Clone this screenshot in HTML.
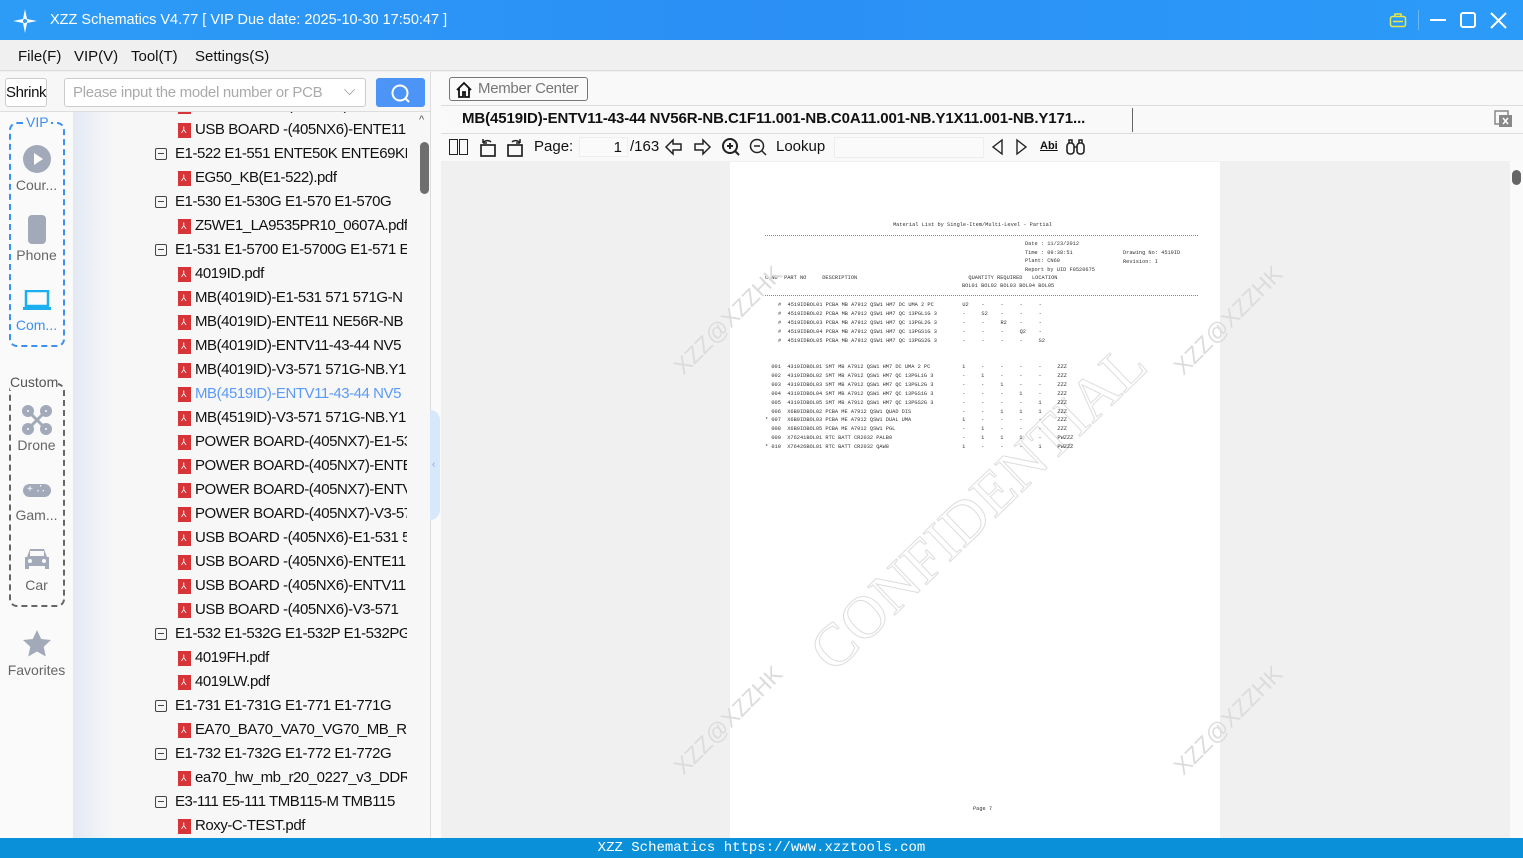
<!DOCTYPE html>
<html><head><meta charset="utf-8"><style>
*{margin:0;padding:0;box-sizing:border-box}
body{width:1523px;height:858px;overflow:hidden;font-family:"Liberation Sans","Noto Sans CJK SC",sans-serif;background:#f0f0f0;position:relative;color:#111}
.a{position:absolute}
.title{left:0;top:0;width:1523px;height:40px;background:linear-gradient(90deg,#2c9cf6,#2b8ff5 50%,#2b9bf9);color:#fff;font-size:14.5px}
.menu{left:0;top:40px;width:1523px;height:31px;background:#f0f0f0;border-bottom:1px solid #dcdcdc;font-size:15px}
.tree{left:73px;top:112px;width:357px;height:726px;background:linear-gradient(90deg,#e3e9f4 0,#f7f7f7 40px);overflow:hidden}
.row{position:absolute;height:24px;line-height:24px;font-size:15px;letter-spacing:-0.45px;white-space:nowrap;overflow:hidden;width:232px}
.pdf{position:absolute;width:13px;height:15px;background:#d73438;top:5px}
.pdf:after{content:"⅄";position:absolute;color:#fff;font-size:9px;line-height:15px;left:3px;top:0}
.minus{position:absolute;width:12px;height:12px;border:1px solid #444;border-radius:2px;top:6px}
.minus:after{content:"";position:absolute;left:2px;top:4px;width:6px;height:1px;background:#444}
.side{left:0;top:112px;width:73px;height:726px;background:#fafafa}
.lbl{position:absolute;width:73px;text-align:center;font-size:14px;color:#666}
.pt{position:absolute;font-size:5.3px;white-space:pre;color:#333;font-family:"Liberation Mono",monospace}
.wm{position:absolute;width:170px;height:30px;line-height:30px;text-align:center;color:#dcdcdc;font-size:23px;transform:rotate(-45deg);white-space:nowrap;font-family:"Liberation Sans",sans-serif}
</style></head><body>
<div class="a title">
 <svg class="a" style="left:12px;top:8px" width="26" height="26" viewBox="0 0 26 26"><path d="M13 1 L15 11 L25 13 L15 15 L13 25 L11 15 L1 13 L11 11Z" fill="#fff"/><circle cx="13" cy="13" r="2" fill="#2c9cf6"/></svg>
 <div class="a" style="left:50px;top:12px">XZZ Schematics V4.77 [ VIP Due date: 2025-10-30 17:50:47 ]</div>
 <svg class="a" style="left:1389px;top:12px" width="18" height="16"><rect x="1.5" y="4.5" width="15" height="10" rx="2" fill="none" stroke="#e8e840" stroke-width="1.5"/><path d="M6 4.5V2h6v2.5M4 9.5h10" stroke="#e8e840" stroke-width="1.5" fill="none"/></svg>
 <div class="a" style="left:1418px;top:10px;width:1px;height:20px;background:#6cb8fa"></div>
 <div class="a" style="left:1430px;top:19px;width:16px;height:2px;background:#fff"></div>
 <div class="a" style="left:1460px;top:12px;width:16px;height:16px;border:2px solid #fff;border-radius:3px"></div>
 <svg class="a" style="left:1490px;top:12px" width="17" height="17"><path d="M1 1L16 16M16 1L1 16" stroke="#fff" stroke-width="2"/></svg>
</div>
<div class="a menu"><span class="a" style="left:18px;top:8px">File(F)</span><span class="a" style="left:74px;top:8px">VIP(V)</span><span class="a" style="left:131px;top:8px">Tool(T)</span><span class="a" style="left:195px;top:8px">Settings(S)</span></div>
<div class="a" style="left:0;top:72px;width:440px;height:40px;background:#f7f7f7;border-bottom:1px solid #ddd"></div>
<div class="a" style="left:5px;top:78px;width:42px;height:29px;border:1px solid #ccc;border-radius:3px;background:#fff;font-size:15px;line-height:27px;text-align:center;letter-spacing:-0.4px">Shrink</div>
<div class="a" style="left:64px;top:78px;width:302px;height:29px;border:1px solid #ccc;border-radius:3px;background:#fff;font-size:15px;line-height:27px;color:#aaa;padding-left:8px;letter-spacing:-0.3px">Please input the model number or PCB<span class="a" style="right:10px;top:-2px;color:#888">⌵</span></div>
<div class="a" style="left:376px;top:78px;width:49px;height:29px;border-radius:3px;background:#4c95f7"><svg class="a" style="left:14px;top:5px" width="22" height="20"><circle cx="10" cy="10" r="7.5" fill="none" stroke="#fff" stroke-width="2"/><path d="M15 15l4 4" stroke="#fff" stroke-width="2"/></svg></div>
<div class="a side">
 <div class="a" style="left:9px;top:10px;width:56px;height:225px;border:2px dashed #3d8ff2;border-radius:8px"></div>
 <div class="a" style="left:24px;top:2px;background:#fafafa;color:#3d8ff2;font-size:14px;padding:0 2px">VIP</div>
 <svg class="a" style="left:23px;top:33px" width="28" height="28"><circle cx="14" cy="14" r="14" fill="#a2a9b8"/><path d="M11 8l9 6-9 6z" fill="#fff"/></svg>
 <div class="lbl" style="top:65px">Cour...</div>
 <div class="a" style="left:28px;top:103px;width:18px;height:29px;background:#a2a9b8;border-radius:4px"></div>
 <div class="lbl" style="top:135px">Phone</div>
 <svg class="a" style="left:22px;top:178px" width="30" height="22"><rect x="4" y="1" width="22" height="15" fill="none" stroke="#1ab0f0" stroke-width="2.5"/><rect x="1" y="17" width="28" height="3" fill="#1ab0f0"/></svg>
 <div class="lbl" style="top:205px;color:#3d8ff2">Com...</div>
 <div class="a" style="left:9px;top:271px;width:56px;height:224px;border:2px dashed #666;border-radius:8px"></div>
 <div class="a" style="left:10px;top:262px;background:#fafafa;color:#555;font-size:14px">Custom</div>
 <svg class="a" style="left:22px;top:293px" width="30" height="30"><g stroke="#a2a9b8" stroke-width="5" fill="none"><circle cx="6" cy="6" r="3.5"/><circle cx="24" cy="6" r="3.5"/><circle cx="6" cy="24" r="3.5"/><circle cx="24" cy="24" r="3.5"/><path d="M8 8l14 14M22 8L8 22" stroke-width="3"/></g></svg>
 <div class="lbl" style="top:325px">Drone</div>
 <div class="a" style="left:23px;top:372px;width:28px;height:13px;background:#a2a9b8;border-radius:7px;color:#fff;font-size:10px;line-height:12px;padding-left:4px">+ ∴</div>
 <div class="lbl" style="top:395px">Gam...</div>
 <svg class="a" style="left:23px;top:435px" width="28" height="24"><path d="M4 10l3-8h14l3 8h2v12h-4v-3H6v3H2V10z" fill="#a2a9b8"/><rect x="7" y="4" width="14" height="5" fill="#fafafa"/><circle cx="7" cy="14" r="2" fill="#fafafa"/><circle cx="21" cy="14" r="2" fill="#fafafa"/></svg>
 <div class="lbl" style="top:465px">Car</div>
 <svg class="a" style="left:22px;top:517px" width="30" height="30"><path d="M15 1l4.2 9 9.8 1-7.3 6.7 2.1 9.8L15 22.5 6.2 27.5l2.1-9.8L1 11l9.8-1z" fill="#a2a9b8"/></svg>
 <div class="lbl" style="top:550px">Favorites</div>
</div>
<div class="a tree">
 <div class="row" style="left:102px;top:-18px"><span class="pdf" style="left:3px"></span><span style="margin-left:20px">USB BOARD -(405NX6)-E</span></div>
 <div class="row" style="left:102px;top:6px"><span class="pdf" style="left:3px"></span><span style="margin-left:20px">USB BOARD -(405NX6)-ENTE11</span></div>
 <div class="row" style="left:82px;top:30px;width:252px"><span class="minus" style="left:0"></span><span style="margin-left:20px">E1-522 E1-551 ENTE50K ENTE69KB</span></div>
 <div class="row" style="left:102px;top:54px"><span class="pdf" style="left:3px"></span><span style="margin-left:20px">EG50_KB(E1-522).pdf</span></div>
 <div class="row" style="left:82px;top:78px;width:252px"><span class="minus" style="left:0"></span><span style="margin-left:20px">E1-530 E1-530G E1-570 E1-570G</span></div>
 <div class="row" style="left:102px;top:102px"><span class="pdf" style="left:3px"></span><span style="margin-left:20px">Z5WE1_LA9535PR10_0607A.pdf</span></div>
 <div class="row" style="left:82px;top:126px;width:252px"><span class="minus" style="left:0"></span><span style="margin-left:20px">E1-531 E1-5700 E1-5700G E1-571 E</span></div>
 <div class="row" style="left:102px;top:150px"><span class="pdf" style="left:3px"></span><span style="margin-left:20px">4019ID.pdf</span></div>
 <div class="row" style="left:102px;top:174px"><span class="pdf" style="left:3px"></span><span style="margin-left:20px">MB(4019ID)-E1-531 571 571G-N</span></div>
 <div class="row" style="left:102px;top:198px"><span class="pdf" style="left:3px"></span><span style="margin-left:20px">MB(4019ID)-ENTE11 NE56R-NB</span></div>
 <div class="row" style="left:102px;top:222px"><span class="pdf" style="left:3px"></span><span style="margin-left:20px">MB(4019ID)-ENTV11-43-44 NV5</span></div>
 <div class="row" style="left:102px;top:246px"><span class="pdf" style="left:3px"></span><span style="margin-left:20px">MB(4019ID)-V3-571 571G-NB.Y1</span></div>
 <div class="row" style="left:102px;top:270px;color:#5b9af5"><span class="pdf" style="left:3px"></span><span style="margin-left:20px">MB(4519ID)-ENTV11-43-44 NV5</span></div>
 <div class="row" style="left:102px;top:294px"><span class="pdf" style="left:3px"></span><span style="margin-left:20px">MB(4519ID)-V3-571 571G-NB.Y1</span></div>
 <div class="row" style="left:102px;top:318px"><span class="pdf" style="left:3px"></span><span style="margin-left:20px">POWER BOARD-(405NX7)-E1-53</span></div>
 <div class="row" style="left:102px;top:342px"><span class="pdf" style="left:3px"></span><span style="margin-left:20px">POWER BOARD-(405NX7)-ENTE</span></div>
 <div class="row" style="left:102px;top:366px"><span class="pdf" style="left:3px"></span><span style="margin-left:20px">POWER BOARD-(405NX7)-ENTV</span></div>
 <div class="row" style="left:102px;top:390px"><span class="pdf" style="left:3px"></span><span style="margin-left:20px">POWER BOARD-(405NX7)-V3-57</span></div>
 <div class="row" style="left:102px;top:414px"><span class="pdf" style="left:3px"></span><span style="margin-left:20px">USB BOARD -(405NX6)-E1-531 5</span></div>
 <div class="row" style="left:102px;top:438px"><span class="pdf" style="left:3px"></span><span style="margin-left:20px">USB BOARD -(405NX6)-ENTE11</span></div>
 <div class="row" style="left:102px;top:462px"><span class="pdf" style="left:3px"></span><span style="margin-left:20px">USB BOARD -(405NX6)-ENTV11</span></div>
 <div class="row" style="left:102px;top:486px"><span class="pdf" style="left:3px"></span><span style="margin-left:20px">USB BOARD -(405NX6)-V3-571</span></div>
 <div class="row" style="left:82px;top:510px;width:252px"><span class="minus" style="left:0"></span><span style="margin-left:20px">E1-532 E1-532G E1-532P E1-532PG</span></div>
 <div class="row" style="left:102px;top:534px"><span class="pdf" style="left:3px"></span><span style="margin-left:20px">4019FH.pdf</span></div>
 <div class="row" style="left:102px;top:558px"><span class="pdf" style="left:3px"></span><span style="margin-left:20px">4019LW.pdf</span></div>
 <div class="row" style="left:82px;top:582px;width:252px"><span class="minus" style="left:0"></span><span style="margin-left:20px">E1-731 E1-731G E1-771 E1-771G</span></div>
 <div class="row" style="left:102px;top:606px"><span class="pdf" style="left:3px"></span><span style="margin-left:20px">EA70_BA70_VA70_VG70_MB_R20</span></div>
 <div class="row" style="left:82px;top:630px;width:252px"><span class="minus" style="left:0"></span><span style="margin-left:20px">E1-732 E1-732G E1-772 E1-772G</span></div>
 <div class="row" style="left:102px;top:654px"><span class="pdf" style="left:3px"></span><span style="margin-left:20px">ea70_hw_mb_r20_0227_v3_DDR3</span></div>
 <div class="row" style="left:82px;top:678px;width:252px"><span class="minus" style="left:0"></span><span style="margin-left:20px">E3-111 E5-111 TMB115-M TMB115</span></div>
 <div class="row" style="left:102px;top:702px"><span class="pdf" style="left:3px"></span><span style="margin-left:20px">Roxy-C-TEST.pdf</span></div>
</div>
<div class="a" style="left:418px;top:112px;width:12px;height:726px;background:#f7f7f7"></div>
<div class="a" style="left:419px;top:114px;font-size:11px;color:#555">^</div>
<div class="a" style="left:420px;top:142px;width:9px;height:52px;background:#6e6e6e;border-radius:5px"></div>
<div class="a" style="left:430px;top:72px;width:11px;height:766px;background:#fafafa;border-left:1px solid #ddd"></div>
<div class="a" style="left:430px;top:410px;width:10px;height:110px;background:#d8e8fb;border-radius:0 10px 10px 0;color:#7aa6e6;font-size:10px;line-height:110px;padding-left:2px">‹</div>
<!-- right panel -->
<div class="a" style="left:441px;top:72px;width:1082px;height:34px;background:#f9f9f9;border-bottom:1px solid #ddd"></div>
<div class="a" style="left:449px;top:77px;width:139px;height:24px;border:1px solid #777;border-radius:3px;background:#fafafa;color:#777;font-size:15px;line-height:22px;padding-left:28px;letter-spacing:-0.3px">Member Center
 <svg class="a" style="left:5px;top:3px" width="18" height="17"><path d="M2 9L9 2l7 7M4 7v9h4v-5h2v5h4V7" fill="none" stroke="#111" stroke-width="1.8"/></svg></div>
<div class="a" style="left:441px;top:106px;width:1082px;height:28px;background:#f9f9f9;border-bottom:1px solid #ddd"></div>
<div class="a" style="left:462px;top:110px;font-size:15px;font-weight:bold;color:#111;letter-spacing:-0.1px">MB(4519ID)-ENTV11-43-44 NV56R-NB.C1F11.001-NB.C0A11.001-NB.Y1X11.001-NB.Y171...</div>
<div class="a" style="left:1132px;top:108px;width:1px;height:24px;background:#666"></div>
<svg class="a" style="left:1494px;top:110px" width="19" height="18"><rect x="1" y="1" width="13" height="13" fill="none" stroke="#888" stroke-width="1.5"/><rect x="5" y="5" width="13" height="12" fill="#888"/><path d="M9 8l5 6M14 8l-5 6" stroke="#fff" stroke-width="1.5"/></svg>
<div class="a" style="left:441px;top:134px;width:1082px;height:27px;background:#f9f9f9"></div>
<div class="a" style="left:449px;top:139px;width:9px;height:16px;border:1.5px solid #222"></div><div class="a" style="left:459px;top:139px;width:9px;height:16px;border:1.5px solid #222"></div>
<svg class="a" style="left:478px;top:137px" width="48" height="20"><rect x="3" y="8" width="14" height="11" fill="none" stroke="#222" stroke-width="1.7"/><path d="M5 6c2-3 6-3 8-1M5 6V2M5 6h4" fill="none" stroke="#222" stroke-width="1.5"/><rect x="30" y="8" width="14" height="11" fill="none" stroke="#222" stroke-width="1.7"/><path d="M42 6c-2-3-6-3-8-1M42 6V2M42 6h-4" fill="none" stroke="#222" stroke-width="1.5"/></svg>
<div class="a" style="left:534px;top:138px;font-size:15px">Page:</div>
<div class="a" style="left:579px;top:137px;width:49px;height:20px;background:#fafafa;border:1px solid #eee;text-align:right;padding-right:5px;font-size:15px;line-height:19px">1</div>
<div class="a" style="left:630px;top:138px;font-size:15px">/163</div>
<svg class="a" style="left:664px;top:138px" width="48" height="18"><path d="M2 9l7-7v4h8v6H9v4z" fill="none" stroke="#222" stroke-width="1.5"/><path d="M46 9l-7-7v4h-8v6h8v4z" fill="none" stroke="#222" stroke-width="1.5"/></svg>
<svg class="a" style="left:721px;top:137px" width="48" height="20"><circle cx="9" cy="9" r="7" fill="none" stroke="#222" stroke-width="2"/><path d="M14 14l4 4M6 9h6M9 6v6" stroke="#222" stroke-width="2"/><circle cx="36" cy="9" r="6.5" fill="none" stroke="#222" stroke-width="1.5"/><path d="M41 14l4 4M33 9h6" stroke="#222" stroke-width="1.5"/></svg>
<div class="a" style="left:776px;top:138px;font-size:15px">Lookup</div>
<div class="a" style="left:834px;top:137px;width:150px;height:21px;background:#fafafa;border:1px solid #eee"></div>
<svg class="a" style="left:990px;top:138px" width="40" height="18"><path d="M12 2L3 9l9 7z M27 2l9 7-9 7z" fill="none" stroke="#222" stroke-width="1.4"/></svg>
<div class="a" style="left:1040px;top:140px;font-size:11px;font-weight:bold;text-decoration:underline">Abi</div>
<svg class="a" style="left:1065px;top:138px" width="22" height="18"><rect x="2" y="5" width="7" height="11" rx="3" fill="none" stroke="#222" stroke-width="1.6"/><rect x="12" y="5" width="7" height="11" rx="3" fill="none" stroke="#222" stroke-width="1.6"/><path d="M4 5V2h3v3M14 5V2h3v3M9 9h3" stroke="#222" stroke-width="1.5" fill="none"/></svg>
<div class="a" style="left:441px;top:161px;width:1069px;height:677px;background:#f0f0f0"></div>
<div class="a" style="left:1510px;top:161px;width:13px;height:677px;background:#fafafa"></div>
<div class="a" style="left:1512px;top:170px;width:9px;height:15px;background:#666;border-radius:5px"></div>
<div class="a" style="left:730px;top:162px;width:490px;height:676px;background:#fff;overflow:hidden">
 <div class="a" style="left:28px;top:310px;width:440px;height:70px;text-align:center;font-family:'Liberation Serif',serif;font-size:60px;line-height:70px;color:#fff;-webkit-text-stroke:1px #ddd;transform:rotate(-44deg);white-space:nowrap">CONFIDENTIAL</div>
 <div class="pt" style="left:163px;top:60px">Material List by Single-Item/Multi-Level - Partial</div>
 <div class="a" style="left:35px;top:73px;width:433px;border-top:1px dotted #888"></div>
 <div class="pt" style="left:295px;top:78px;line-height:8.7px">Date : 11/23/2012
Time : 09:38:51
Plant: CN60
Report by UID F0520675</div>
 <div class="pt" style="left:393px;top:87px;line-height:8.7px">Drawing No: 4519ID
Revision: I</div>
 <div class="pt" style="left:35px;top:113px">C NO  PART NO     DESCRIPTION                                   QUANTITY REQUIRED   LOCATION</div>
 <div class="pt" style="left:232px;top:121px">BOL01 BOL02 BOL03 BOL04 BOL05</div>
 <div class="a" style="left:35px;top:133px;width:433px;border-top:1px dotted #888"></div>
 <div class="pt" style="left:48px;top:139px;line-height:9px">#  4519IDBOL01 PCBA MB A7912 QSW1 HM7 DC UMA 2 PC         U2    -     -     -     -
#  4519IDBOL02 PCBA MB A7912 QSW1 HM7 QC 13PGL1G 3        -     S2    -     -     -
#  4519IDBOL03 PCBA MB A7912 QSW1 HM7 QC 13PGL2G 3        -     -     R2    -     -
#  4519IDBOL04 PCBA MB A7912 QSW1 HM7 QC 13PGS1G 3        -     -     -     Q2    -
#  4519IDBOL05 PCBA MB A7912 QSW1 HM7 QC 13PGS2G 3        -     -     -     -     S2</div>
 <div class="pt" style="left:35px;top:201px;line-height:8.9px">  001  4319IDBOL01 SMT MB A7912 QSW1 HM7 DC UMA 2 PC          1     -     -     -     -     ZZZ
  002  4319IDBOL02 SMT MB A7912 QSW1 HM7 QC 13PGL1G 3         -     1     -     -     -     ZZZ
  003  4319IDBOL03 SMT MB A7912 QSW1 HM7 QC 13PGL2G 3         -     -     1     -     -     ZZZ
  004  4319IDBOL04 SMT MB A7912 QSW1 HM7 QC 13PGS1G 3         -     -     -     1     -     ZZZ
  005  4319IDBOL05 SMT MB A7912 QSW1 HM7 QC 13PGS2G 3         -     -     -     -     1     ZZZ
  006  X6B9IDBOL02 PCBA ME A7912 QSW1 QUAD DIS                -     -     1     1     1     ZZZ
* 007  X6B9IDBOL03 PCBA ME A7912 QSW1 DUAL UMA                1     -     -     -     -     ZZZ
  008  X6B9IDBOL05 PCBA ME A7912 QSW1 PGL                     -     1     -     -     -     ZZZ
  009  X76241BOL01 RTC BATT CR2032 PALB0                      -     1     1     1     -     PWZZZ
* 010  X76426BOL01 RTC BATT CR2032 QAW8                       1     -     -     -     1     PWZZZ</div>
 <div class="pt" style="left:243px;top:644px">Page 7</div>
</div>
<div class="wm" style="left:643px;top:305px">XZZ@XZZHK</div>
<div class="wm" style="left:1143px;top:305px">XZZ@XZZHK</div>
<div class="wm" style="left:643px;top:705px">XZZ@XZZHK</div>
<div class="wm" style="left:1143px;top:705px">XZZ@XZZHK</div>
<div class="a" style="left:0;top:838px;width:1523px;height:20px;background:#0a90d8;color:#fff;font-family:'Liberation Mono',monospace;font-size:14px;text-align:center;line-height:20px">XZZ Schematics https://www.xzztools.com</div>
</body></html>
